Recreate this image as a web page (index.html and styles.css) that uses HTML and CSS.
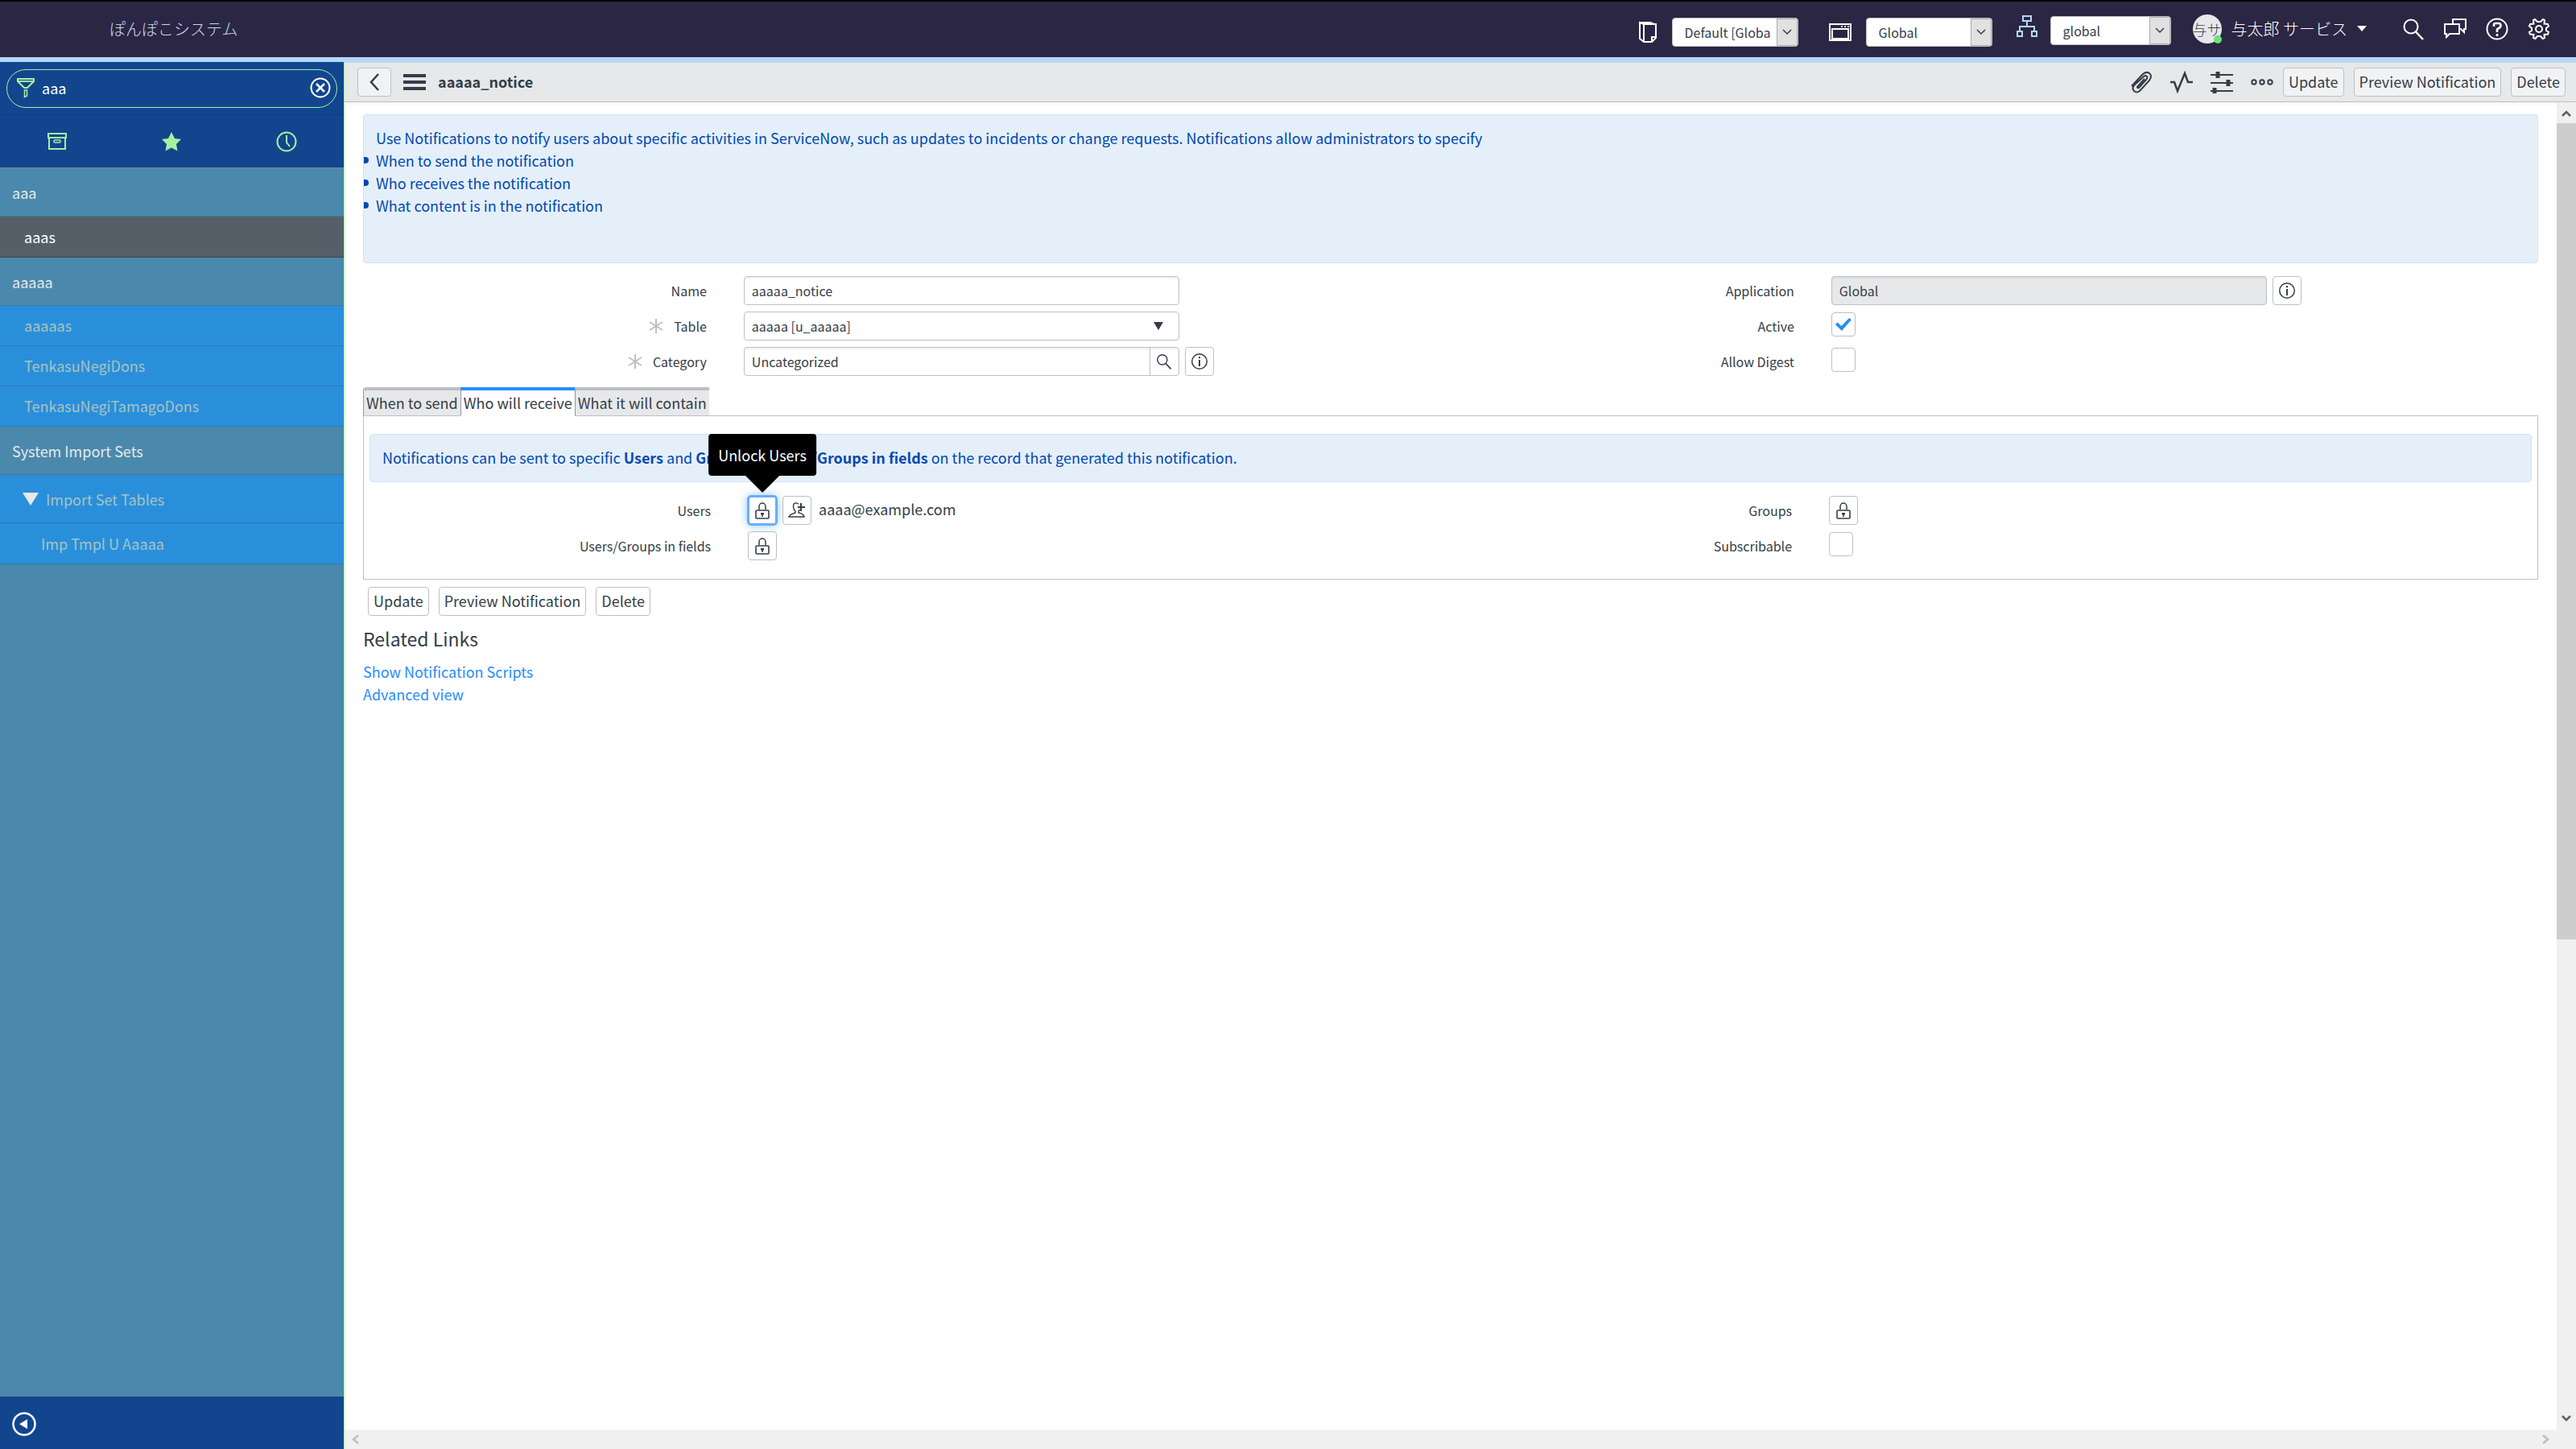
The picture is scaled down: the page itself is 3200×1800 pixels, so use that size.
FILE: index.html
```html
<!DOCTYPE html>
<html lang="en">

<head>
    <meta charset="UTF-8">
    <meta name="viewport" content="width=device-width, initial-scale=1.0">
    <title>aaaaa_notice | Notification</title>
    <link rel="stylesheet" href="styles.css">
</head>

<body>
    <!-- Shared icons -->
    <svg class="sprite" aria-hidden="true">
        <symbol id="icon-lock" viewBox="0 0 18 22">
            <path d="M5 10V6a4 4 0 0 1 8 0v4" fill="none" stroke="currentColor" stroke-width="1.5" />
            <rect x="1" y="11" width="16" height="10" rx="1" fill="none" stroke="currentColor" stroke-width="1.6" />
            <path d="M7 14h4v2.500H9.800V19H8.200v-2.500H7z" fill="currentColor" />
        </symbol>
        <symbol id="icon-info" viewBox="0 0 22 22">
            <circle cx="11" cy="11" r="9.300" fill="none" stroke="currentColor" stroke-width="1.500" />
            <path d="M11 9v8M11 5v2.200" stroke="currentColor" stroke-width="2" />
        </symbol>
        <symbol id="icon-search" viewBox="0 0 28 28">
            <circle cx="11" cy="11" r="8.500" fill="none" stroke="currentColor" stroke-width="2" />
            <path d="M17 17.500L26 27" stroke="currentColor" stroke-width="2.500" />
        </symbol>
        <symbol id="icon-down" viewBox="0 0 12 8">
            <path d="M1 1l5 5 5-5" fill="none" stroke="currentColor" stroke-width="1.500" />
        </symbol>
        <symbol id="icon-required" viewBox="0 0 18 18">
            <path d="M9 0v18M1 4l16 10M17 4L1 14" stroke="currentColor" stroke-width="2" />
        </symbol>
    </svg>

    <header class="banner">
        <div class="brand">ぽんぽこシステム</div>
        <div class="banner-tools">
            <label class="picker update-set">
                <svg width="24" height="28" viewBox="0 0 24 28" role="img" aria-label="Update set">
                    <path d="M7 4H22V21L17 26H7zM22 20h-5v6M7 4L2 2v20l5 4M2 2h13l5 2" fill="none" stroke="currentColor" stroke-width="2" />
                </svg>
                <span class="picker-box">
                    <select><option>Default [Global]</option></select>
                    <span class="picker-arrow"><svg width="12" height="8"><use href="#icon-down" /></svg></span>
                </span>
            </label>
            <label class="picker application">
                <svg width="28" height="22" viewBox="0 0 28 22" role="img" aria-label="Application">
                    <path d="M1 1h26v20H1zM3 7h22M4 8v11h20V8" fill="none" stroke="currentColor" stroke-width="2" />
                    <path d="M15 4h2M19 4h2M23 4h2" stroke="currentColor" stroke-width="2" />
                </svg>
                <span class="picker-box">
                    <select><option>Global</option></select>
                    <span class="picker-arrow"><svg width="12" height="8"><use href="#icon-down" /></svg></span>
                </span>
            </label>
            <label class="picker domain">
                <svg width="26" height="28" viewBox="0 0 26 28" role="img" aria-label="Domain">
                    <path d="M8 1h10v6H8zM13 7v7M4 20v-6h18v6M1 20h6v6H1zM19 20h6v6h-6z" fill="none" stroke="currentColor" stroke-width="2" />
                </svg>
                <span class="picker-box">
                    <select><option>global</option></select>
                    <span class="picker-arrow"><svg width="12" height="8"><use href="#icon-down" /></svg></span>
                </span>
            </label>
            <button class="user-menu">
                <span class="avatar"><span class="initials">与サ</span><span class="presence"></span></span>
                <span>与太郎 サービス</span>
                <svg width="12" height="7" viewBox="0 0 12 7"><path d="M0 0h12L6 7z" fill="currentColor" /></svg>
            </button>
            <div class="banner-icons">
                <button aria-label="Search"><svg width="28" height="28"><use href="#icon-search" /></svg></button>
                <button aria-label="Chat">
                    <svg width="28" height="28" viewBox="0 0 28 28" fill="none" stroke="currentColor" stroke-width="2">
                        <path d="M1 8h18v12H7l-4 4v-4H1zM11 7V2h16v12h-2v4l-4-4h-2" />
                    </svg>
                </button>
                <button aria-label="Help">
                    <svg width="28" height="28" viewBox="0 0 28 28" fill="none" stroke="currentColor">
                        <circle cx="14" cy="14" r="12.500" stroke-width="2" />
                        <path d="M10 11V8.500Q10 7 12 7h4q2.500 0 2.500 2.500T16 13l-2 1.500V18M14 20v3" stroke-width="2.600" />
                    </svg>
                </button>
                <button aria-label="Settings">
                    <svg width="28" height="28" viewBox="0 0 28 28" fill="none" stroke="currentColor" stroke-width="2">
                        <circle cx="14" cy="14" r="4" />
                        <path d="M12 5l-3-3-2 1 .5 4.500L3 8l-1 2.500L5 13v3l-3 2 1 2.500 4.500.5L7 25l2.500 1L12 23h4l2.500 3 2.500-1-.5-4 4.500-.5 1-2.500-3-2v-3l3-2.500L25 8l-4.500-.5L21 3l-2-1-3 3z" />
                    </svg>
                </button>
            </div>
        </div>
    </header>

    <div class="layout">
        <nav class="sidebar">
            <div class="filter">
                <div class="filter-box">
                    <svg width="24" height="26" viewBox="0 0 24 26" fill="none" stroke="currentColor" stroke-width="2">
                        <path d="M2 2h20v3L14 13h-4L2 5zM2 5h20" />
                        <path d="M10.500 16h3v7l-3 1.500z" stroke-width="1.500" />
                    </svg>
                    <input type="text" value="aaa" aria-label="Filter navigator">
                    <button class="clear" aria-label="Clear filter">
                        <svg width="26" height="26" viewBox="0 0 26 26" fill="none" stroke="currentColor" stroke-width="2">
                            <circle cx="13" cy="13" r="11.500" />
                            <path d="M8 8l10 10M18 8L8 18" stroke-width="2.500" />
                        </svg>
                    </button>
                </div>
            </div>
            <div class="nav-tabs">
                <button aria-label="All applications">
                    <svg width="24" height="22" viewBox="0 0 24 22" fill="none" stroke="currentColor" stroke-width="2">
                        <path d="M1 1h22v5H1zM2 6v14h20V6" />
                        <rect x="8" y="9" width="8" height="3" rx="1" stroke-width="1.500" />
                    </svg>
                </button>
                <button aria-label="Favorites">
                    <svg width="24" height="24" viewBox="0 0 24 24"><path d="M12 0l4 8 8 1-6 6 1.500 8.500L12 19.500 4.500 23.500 6 15 0 9l8-1z" fill="currentColor" /></svg>
                </button>
                <button aria-label="History">
                    <svg width="26" height="26" viewBox="0 0 26 26" fill="none" stroke="currentColor" stroke-width="2">
                        <circle cx="13" cy="13" r="11.500" />
                        <path d="M13 5v9l4 5" />
                    </svg>
                </button>
            </div>
            <ul class="nav-list">
                <li class="nav-app"><a href="#">aaa</a></li>
                <li class="nav-module selected"><a href="#">aaas</a></li>
                <li class="nav-app"><a href="#">aaaaa</a></li>
                <li class="nav-module"><a href="#">aaaaas</a></li>
                <li class="nav-module"><a href="#">TenkasuNegiDons</a></li>
                <li class="nav-module"><a href="#">TenkasuNegiTamagoDons</a></li>
                <li class="nav-app"><a href="#">System Import Sets</a></li>
                <li class="nav-module nav-parent">
                    <a href="#"><svg width="20" height="16" viewBox="0 0 20 16"><path d="M0 0h20L10 16z" fill="currentColor" /></svg>Import Set Tables</a>
                </li>
                <li class="nav-module nav-child"><a href="#">Imp Tmpl U Aaaaa</a></li>
            </ul>
            <div class="nav-footer">
                <button aria-label="Collapse navigator">
                    <svg width="30" height="30" viewBox="0 0 30 30">
                        <circle cx="15" cy="15" r="13.500" fill="none" stroke="currentColor" stroke-width="2.500" />
                        <path d="M9 15l10-6v12z" fill="currentColor" />
                    </svg>
                </button>
            </div>
        </nav>

        <main class="content">
            <div class="form-header">
                <button class="btn back" aria-label="Back">
                    <svg width="14" height="22" viewBox="0 0 14 22"><path d="M12 1L3 11l9 10" fill="none" stroke="currentColor" stroke-width="2.500" /></svg>
                </button>
                <button class="icon-btn menu" aria-label="Form menu">
                    <svg width="28" height="20" viewBox="0 0 28 20"><path d="M0 2h28M0 10h28M0 18h28" stroke="currentColor" stroke-width="4" /></svg>
                </button>
                <h1>aaaaa_notice</h1>
                <div class="form-icons">
                    <button class="icon-btn" aria-label="Attachments">
                        <svg width="28" height="28" viewBox="0 0 28 28" fill="none" stroke="currentColor" stroke-width="2">
                            <path d="M2 19L15 5q5-5 9-2t0 9L12 25q-4 3-7 0t0-7L17 7q3-2 4 0t-1 4L11 21q-2 1-2-1l9-10" />
                        </svg>
                    </button>
                    <button class="icon-btn" aria-label="Activity">
                        <svg width="28" height="28" viewBox="0 0 28 28" fill="none" stroke="currentColor" stroke-width="2.500">
                            <path d="M0 14h5l4 11L18 3l4 11h6" />
                        </svg>
                    </button>
                    <button class="icon-btn" aria-label="Personalize form">
                        <svg width="28" height="28" viewBox="0 0 28 28" stroke="currentColor">
                            <path d="M0 5h28M0 15h28M0 25h28" stroke-width="2" />
                            <path d="M9 1v8M22 11v8M5 21v7" stroke-width="5" />
                        </svg>
                    </button>
                    <button class="icon-btn" aria-label="More options">
                        <svg width="28" height="8" viewBox="0 0 28 8" fill="none" stroke="currentColor" stroke-width="2">
                            <circle cx="4" cy="4" r="2.700" /><circle cx="14" cy="4" r="2.700" /><circle cx="24" cy="4" r="2.700" />
                        </svg>
                    </button>
                </div>
                <button class="btn">Update</button>
                <button class="btn">Preview Notification</button>
                <button class="btn">Delete</button>
            </div>

            <div class="form-area">
                <div class="form-body">
                    <div class="info-box intro">
                        <p>Use Notifications to notify users about specific activities in ServiceNow, such as updates to incidents or change requests. Notifications allow administrators to specify</p>
                        <ul>
                            <li>When to send the notification</li>
                            <li>Who receives the notification</li>
                            <li>What content is in the notification</li>
                        </ul>
                    </div>

                    <form class="fields">
                        <div class="column">
                            <div class="field">
                                <label for="name">Name</label>
                                <div class="control"><input class="text" type="text" id="name" value="aaaaa_notice"></div>
                            </div>
                            <div class="field">
                                <label for="table"><svg class="required" width="18" height="18"><use href="#icon-required" /></svg>Table</label>
                                <div class="control">
                                    <div class="select-box">
                                        <select id="table"><option>aaaaa [u_aaaaa]</option></select>
                                        <svg width="12" height="10" viewBox="0 0 12 10"><path d="M0 0h12L6 10z" fill="currentColor" /></svg>
                                    </div>
                                </div>
                            </div>
                            <div class="field">
                                <label for="category"><svg class="required" width="18" height="18"><use href="#icon-required" /></svg>Category</label>
                                <div class="control">
                                    <div class="lookup">
                                        <input class="text" type="text" id="category" value="Uncategorized">
                                        <button type="button" class="square" aria-label="Look up category"><svg width="20" height="20"><use href="#icon-search" /></svg></button>
                                    </div>
                                    <button type="button" class="square" aria-label="Preview category"><svg width="22" height="22"><use href="#icon-info" /></svg></button>
                                </div>
                            </div>
                        </div>
                        <div class="column">
                            <div class="field">
                                <label for="app">Application</label>
                                <div class="control">
                                    <input class="text" type="text" id="app" value="Global" readonly>
                                    <button type="button" class="square" aria-label="Preview application"><svg width="22" height="22"><use href="#icon-info" /></svg></button>
                                </div>
                            </div>
                            <div class="field">
                                <label for="active">Active</label>
                                <div class="control"><input class="check" type="checkbox" id="active" checked></div>
                            </div>
                            <div class="field">
                                <label for="digest">Allow Digest</label>
                                <div class="control"><input class="check" type="checkbox" id="digest"></div>
                            </div>
                        </div>
                    </form>

                    <div class="tabs" role="tablist">
                        <button class="tab" role="tab">When to send</button>
                        <button class="tab active" role="tab" aria-selected="true">Who will receive</button>
                        <button class="tab" role="tab">What it will contain</button>
                        <span class="tabs-rest"></span>
                    </div>
                    <section class="panel">
                        <div class="info-box">
                            <p>Notifications can be sent to specific <b>Users</b> and <b>Groups</b>, or <b>Users/Groups in fields</b> on the record that generated this notification.</p>
                        </div>
                        <form class="fields">
                            <div class="column">
                                <div class="field">
                                    <label for="unlock-users">Users</label>
                                    <div class="control">
                                        <span class="tooltip-anchor">
                                            <button type="button" class="square focused" id="unlock-users"><svg width="18" height="22"><use href="#icon-lock" /></svg></button>
                                            <span class="tooltip" role="tooltip">Unlock Users</span>
                                        </span>
                                        <button type="button" class="square" aria-label="Add me">
                                            <svg width="22" height="20" viewBox="0 0 22 20" fill="none" stroke="currentColor" stroke-width="1.500">
                                                <path d="M13 2Q7-1 6.500 4q0 5 2.500 7v2q-7 2-8 5h19q-1-4-7-5v-2l1.500-2" />
                                                <path d="M16 1v10M12 6h9" stroke-width="2" />
                                            </svg>
                                        </button>
                                        <span class="value">aaaa@example.com</span>
                                    </div>
                                </div>
                                <div class="field">
                                    <label for="unlock-fields">Users/Groups in fields</label>
                                    <div class="control"><button type="button" class="square" id="unlock-fields"><svg width="18" height="22"><use href="#icon-lock" /></svg></button></div>
                                </div>
                            </div>
                            <div class="column">
                                <div class="field">
                                    <label for="unlock-groups">Groups</label>
                                    <div class="control"><button type="button" class="square" id="unlock-groups"><svg width="18" height="22"><use href="#icon-lock" /></svg></button></div>
                                </div>
                                <div class="field">
                                    <label for="subscribable">Subscribable</label>
                                    <div class="control"><input class="check" type="checkbox" id="subscribable"></div>
                                </div>
                            </div>
                        </form>
                    </section>

                    <div class="actions">
                        <button class="btn">Update</button>
                        <button class="btn">Preview Notification</button>
                        <button class="btn">Delete</button>
                    </div>

                    <h2>Related Links</h2>
                    <ul class="related">
                        <li><a href="#">Show Notification Scripts</a></li>
                        <li><a href="#">Advanced view</a></li>
                    </ul>
                </div>

                <div class="scroll-y" aria-hidden="true">
                    <svg width="12" height="8" viewBox="0 0 12 8"><path d="M1 7l5-5 5 5" fill="none" stroke="currentColor" stroke-width="2.500" /></svg>
                    <div class="track"><div class="thumb"></div></div>
                    <svg width="12" height="8" viewBox="0 0 12 8"><path d="M1 1l5 5 5-5" fill="none" stroke="currentColor" stroke-width="2.500" /></svg>
                </div>
                <div class="scroll-x" aria-hidden="true">
                    <svg width="10" height="12" viewBox="0 0 10 12"><path d="M8 1L2 6l6 5" fill="none" stroke="currentColor" stroke-width="2.500" /></svg>
                    <svg width="10" height="12" viewBox="0 0 10 12"><path d="M2 1l6 5-6 5" fill="none" stroke="currentColor" stroke-width="2.500" /></svg>
                </div>
            </div>
        </main>
    </div>
</body>

</html>
```
FILE: styles.css
```css
* {
    box-sizing: border-box;
}

body {
    margin: 0;
    height: 100vh;
    display: flex;
    flex-direction: column;
    overflow: hidden;
    background: #fff;
    color: #343d47;
    font-family: "Noto Sans CJK JP", "Noto Sans", sans-serif;
    font-size: 18px;
    line-height: 28px;
}

button,
input,
select {
    font: inherit;
    color: inherit;
}

button {
    padding: 0;
    border: none;
    background: none;
    cursor: pointer;
}

svg {
    display: block;
    flex: none;
}

ul {
    margin: 0;
    padding: 0;
    list-style: none;
}

a {
    color: inherit;
    text-decoration: none;
}

.sprite {
    position: absolute;
    width: 0;
    height: 0;
}

/* Banner */
.banner {
    flex: none;
    display: flex;
    align-items: center;
    justify-content: space-between;
    height: 77px;
    padding: 0 32px 2px 136px;
    border-top: 2px solid #000;
    border-bottom: 6px solid #b5d6ff;
    background: #2b2643;
    color: #fff;
}

.brand {
    font-size: 20px;
    font-weight: 300;
    color: #c2dcff;
}

.banner-tools {
    display: flex;
    align-items: center;
}

.picker {
    display: flex;
    align-items: center;
    gap: 18px;
    margin-right: 38px;
    padding-top: 8px;
}

.picker.application {
    margin-right: 30px;
}

.picker.domain {
    gap: 16px;
    margin-right: 27px;
    padding-top: 4px;
}

.picker.domain > svg {
    margin-bottom: 10px;
    color: #b5d6ff;
}

.picker-box {
    display: flex;
    width: 157px;
    height: 36px;
    border: 1px solid #bdc0c4;
    border-radius: 4px;
    background: #fff;
    color: #343d47;
    overflow: hidden;
}

.domain .picker-box {
    width: 150px;
}

.picker-box select {
    flex: 1;
    min-width: 0;
    margin-right: 8px;
    padding: 0 0 0 15px;
    border: none;
    background: none;
    font-size: 16px;
    appearance: none;
}

.picker-arrow {
    display: flex;
    align-items: center;
    justify-content: center;
    width: 26px;
    border: 1px solid #adadad;
    background: #e1e1e1;
}

.user-menu {
    display: flex;
    align-items: center;
    gap: 12px;
    color: #fff;
    font-size: 20px;
    font-weight: 300;
}

.avatar {
    position: relative;
    width: 36px;
    height: 36px;
    border-radius: 50%;
    background: #e6e8ea;
    color: #343d47;
    font-size: 18px;
    line-height: 36px;
}

.initials {
    display: block;
    white-space: nowrap;
}

.presence {
    position: absolute;
    right: 0;
    bottom: 0;
    width: 10px;
    height: 10px;
    border-radius: 50%;
    background: #71e279;
}

.banner-icons {
    display: flex;
    gap: 24px;
    margin-left: 44px;
    color: #fff;
}

/* Navigator */
.layout {
    flex: 1;
    display: flex;
    min-height: 0;
}

.sidebar {
    flex: none;
    display: flex;
    flex-direction: column;
    width: 428px;
    border-right: 1px solid #a6f0a0;
    background: #4a89ac;
    color: #e6e8ea;
}

.filter {
    padding: 9px 8px 8px;
    border-bottom: 1px solid #0f3b78;
    background: #11468f;
}

.filter-box {
    display: flex;
    align-items: center;
    height: 48px;
    padding: 0 7px 2px 11px;
    border: 1px solid #a6f0a0;
    border-radius: 24px;
    color: #a6f0a0;
}

.filter-box input {
    flex: 1;
    min-width: 0;
    padding: 0 8px;
    border: none;
    outline: none;
    background: none;
    color: #fff;
}

.clear {
    color: #fff;
}

.nav-tabs {
    display: flex;
    height: 66px;
    border-bottom: 1px solid #808285;
    background: #11468f;
    color: #a6f0a0;
}

.nav-tabs button {
    flex: 1;
    display: flex;
    align-items: center;
    justify-content: center;
}

.nav-list {
    flex: 1;
}

.nav-list a {
    display: flex;
    align-items: center;
    height: 50px;
    padding: 0 15px 2px;
    border-bottom: 1px solid #2a7bb9;
    background: #2a8fdb;
    color: #a8c3c0;
}

.nav-list .nav-app a {
    height: 60px;
    padding-bottom: 0;
    border-color: #41779a;
    background: none;
    color: #e6e8ea;
}

.nav-list .nav-module a {
    padding-left: 30px;
}

.nav-list .selected a,
.nav-list .nav-child a {
    height: 51px;
    padding-bottom: 0;
}

.nav-list .selected a {
    border-color: #3f474f;
    background: #555f68;
    color: #fff;
}

.nav-list .nav-parent a {
    height: 60px;
    padding-left: 28px;
    padding-bottom: 0;
    gap: 9px;
}

.nav-parent svg {
    color: #e6e8ea;
}

.nav-list .nav-child a {
    padding-left: 51px;
}

.nav-footer {
    display: flex;
    align-items: center;
    height: 65px;
    padding: 2px 15px 0;
    border-top: 1px solid #0f3b78;
    background: #11468f;
}

.nav-footer button {
    color: #fff;
}

/* Form header */
.content {
    flex: 1;
    display: flex;
    flex-direction: column;
    min-width: 0;
}

.form-header {
    flex: none;
    display: flex;
    align-items: center;
    gap: 12px;
    height: 50px;
    padding: 0 13px 0 16px;
    border-top: 1px solid #d3d6da;
    border-bottom: 1px solid #bdc0c4;
    background: #e6e8ea;
    box-shadow: 0 2px 4px #0000000d;
}

.form-header h1 {
    flex: 1;
    margin: 0;
    padding: 0 0 2px 3px;
    font-size: 18px;
    font-weight: bold;
}

.form-header .menu {
    margin-left: 3px;
}

.form-icons {
    display: flex;
    align-items: center;
    gap: 22px;
}

.btn {
    display: flex;
    align-items: center;
    justify-content: center;
    height: 36px;
    padding: 0 6px 2px;
    border: 1px solid #bdc0c4;
    border-radius: 4px;
    background: #fff;
}

.form-header .btn {
    background: #f1f2f4;
}

.form-header .back {
    width: 42px;
    padding-bottom: 0;
}

/* Form body */
.form-area {
    flex: 1;
    display: grid;
    grid-template-columns: 1fr 24px;
    grid-template-rows: 1fr 24px;
    min-height: 0;
}

.form-body {
    min-width: 0;
    padding: 15px 23px;
    overflow: hidden;
}

.info-box {
    padding: 14px 15px 16px;
    border: 1px solid #cfe3f8;
    border-radius: 4px;
    background: #e5effa;
    color: #0049b0;
}

.info-box p {
    margin: 0;
}

.intro {
    padding-bottom: 57px;
}

/* Bullets are cut by the left edge of the box */
.intro li {
    display: flex;
    align-items: center;
    gap: 9px;
    margin-left: -15px;
}

.intro li::before {
    content: "";
    width: 6px;
    height: 8px;
    border-radius: 0 4px 4px 0;
    background: #0049b0;
}

.fields {
    display: flex;
    padding-top: 16px;
}

.column {
    flex: 1;
    display: flex;
    flex-direction: column;
    gap: 8px;
    font-size: 16px;
}

.field {
    display: grid;
    grid-template-columns: 35% 65%;
    align-items: center;
    min-height: 36px;
}

.field label {
    display: flex;
    align-items: center;
    justify-content: flex-end;
    gap: 13px;
    padding-right: 46px;
}

.required {
    color: #bdc0c4;
}

.control {
    display: flex;
    align-items: center;
    gap: 7px;
}

.text,
.select-box,
.lookup {
    width: 61.6%;
    height: 36px;
    border: 1px solid #bdc0c4;
    border-radius: 4px;
    background: #fff;
    box-shadow: inset 0 2px 2px #0000000f;
}

.text {
    padding: 0 9px;
}

.text:read-only {
    background: #e6e8ea;
}

.select-box {
    display: flex;
    align-items: center;
    padding-right: 19px;
    box-shadow: none;
}

.select-box select {
    flex: 1;
    padding: 0 9px;
    border: none;
    background: none;
    appearance: none;
}

.lookup {
    display: flex;
    overflow: hidden;
}

.lookup .text {
    flex: 1;
    height: 34px;
    border: none;
    box-shadow: none;
    background: none;
}

.square {
    display: flex;
    align-items: center;
    justify-content: center;
    width: 36px;
    height: 36px;
    border: 1px solid #bdc0c4;
    border-radius: 4px;
}

.lookup .square {
    height: 34px;
    border-width: 0 0 0 1px;
    border-radius: 0;
}

.focused {
    border-color: #278efc;
    outline: 3px solid #66affc;
    outline-offset: -2px;
    box-shadow: 0 0 12px #278efc99;
}

.check {
    display: grid;
    place-items: center;
    width: 30px;
    height: 30px;
    margin: 0 0 4px;
    border: 1px solid #bdc0c4;
    border-radius: 4px;
    appearance: none;
}

.check:checked::before {
    content: "";
    width: 20px;
    height: 16px;
    background: #278efc;
    clip-path: polygon(0 50%, 14% 34%, 38% 62%, 86% 0, 100% 14%, 40% 100%);
}

.value {
    padding: 0 0 4px 2px;
    font-size: 18px;
}

.tooltip-anchor {
    position: relative;
}

.tooltip {
    position: absolute;
    bottom: calc(100% + 25px);
    left: 50%;
    transform: translateX(-50%);
    padding: 12px;
    border-radius: 4px;
    background: #000;
    color: #fff;
    font-size: 18px;
    white-space: nowrap;
}

.tooltip::after {
    content: "";
    position: absolute;
    top: 100%;
    left: 50%;
    transform: translateX(-50%);
    border: 21px solid transparent;
    border-top-color: #000;
    border-bottom: none;
}

/* Tabs */
.tabs {
    display: flex;
    margin-top: 14px;
}

.tab {
    height: 36px;
    padding: 0 3px 2px;
    border-top: 4px solid #bdc0c4;
    border-left: 1px solid #94979b;
    border-bottom: 1px solid #bdc0c4;
    background: #e6e8ea;
}

.tab:first-child {
    border-top-left-radius: 4px;
}

.tab.active {
    border-top-color: #278efc;
    border-bottom-color: #fff;
    background: #fff;
}

.tabs-rest {
    flex: 1;
    border-bottom: 1px solid #bdc0c4;
}

.panel {
    padding: 22px 7px 23px;
    border: 1px solid #bdc0c4;
    border-top: none;
}

.panel .fields {
    padding-top: 17px;
}

.actions {
    display: flex;
    gap: 12px;
    padding: 9px 6px 0;
}

h2 {
    margin: 14px 0 13px;
    font-size: 23px;
    font-weight: normal;
    line-height: 28px;
}

.related {
    color: #278efc;
}

/* Scrollbars */
.scroll-y {
    grid-row: 1 / 3;
    grid-column: 2;
    display: flex;
    flex-direction: column;
    align-items: center;
    gap: 8px;
    padding: 10px 0 34px;
    background: #f0f0f0;
    color: #606060;
}

.track {
    flex: 1;
    width: 100%;
}

.thumb {
    height: 63.5%;
    background: #cdcdcd;
}

.scroll-x {
    display: flex;
    align-items: center;
    justify-content: space-between;
    padding: 0 9px;
    background: #f0f0f0;
    color: #bfbfbf;
}
```
